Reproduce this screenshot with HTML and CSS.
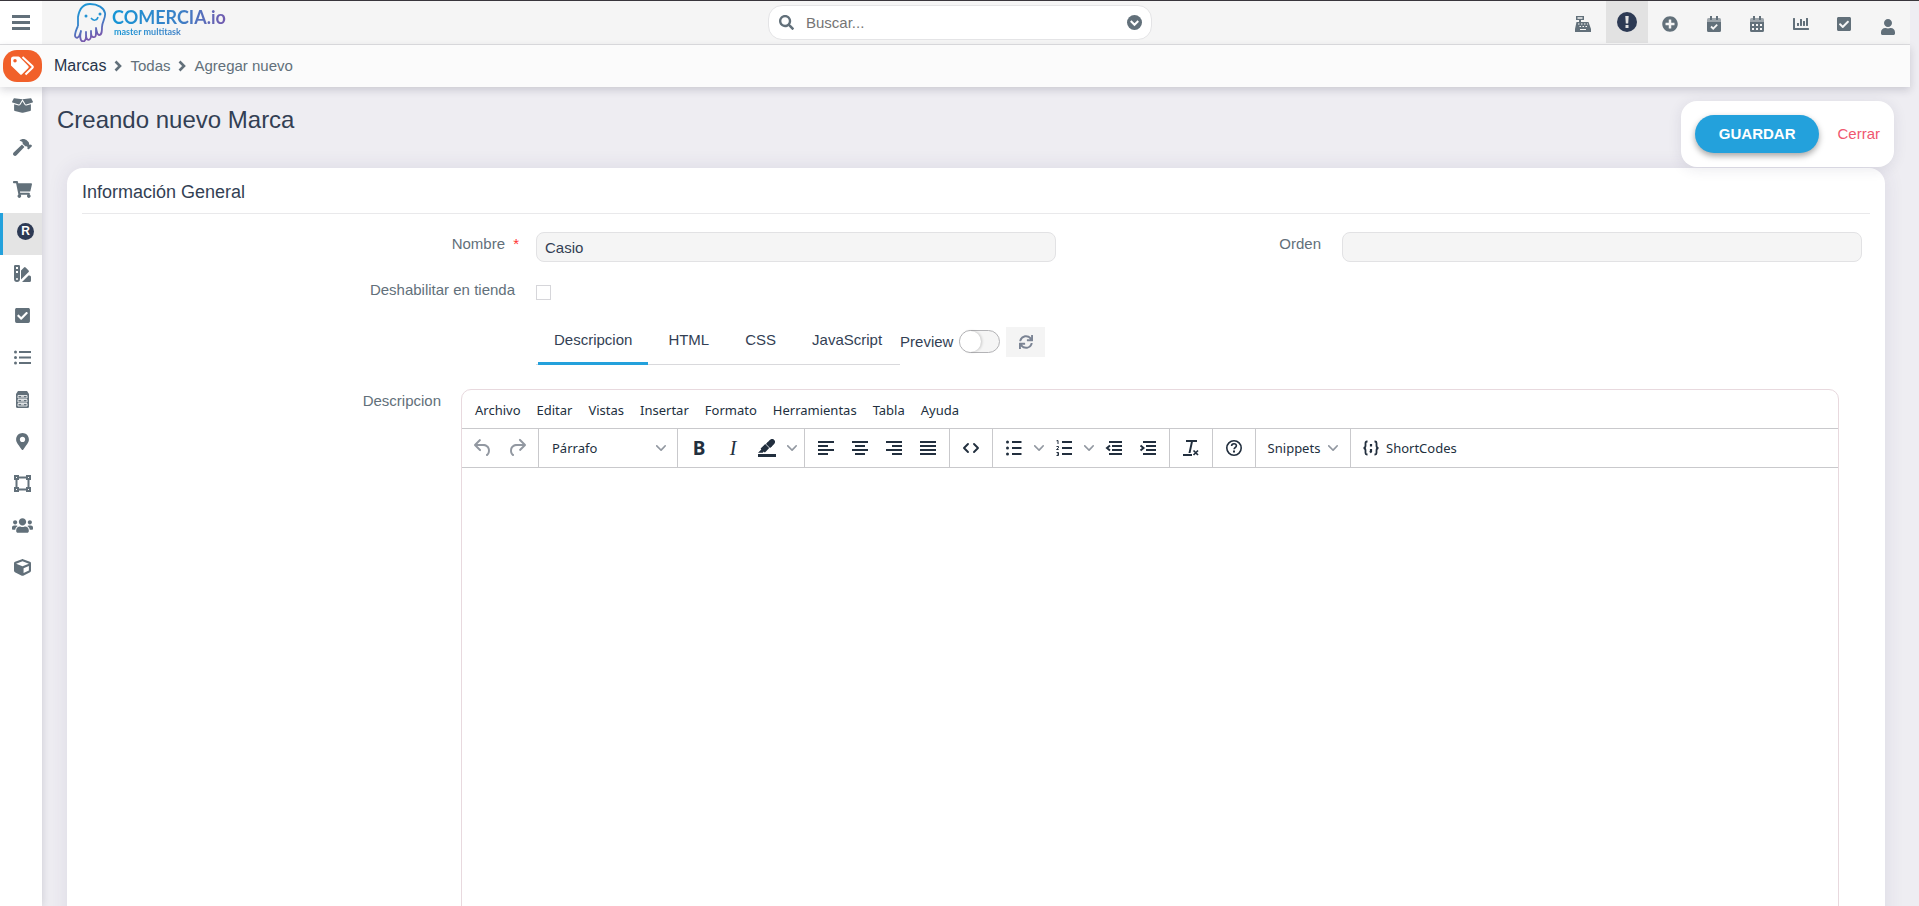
FILE: index.html
```html
<!DOCTYPE html>
<html lang="es">
<head>
<meta charset="utf-8">
<meta name="viewport" content="width=device-width, initial-scale=1">
<title>Creando nuevo Marca</title>
<link rel="stylesheet" href="styles.css">
</head>
<body>
<svg class="sprite" aria-hidden="true">
  <symbol id="check-square" viewBox="0 0 448 512"><path d="M400 480H48c-26.510 0-48-21.490-48-48V80c0-26.510 21.490-48 48-48h352c26.510 0 48 21.490 48 48v352c0 26.510-21.490 48-48 48zm-204.686-98.059l184-184c6.248-6.248 6.248-16.379 0-22.627l-22.627-22.627c-6.248-6.248-16.379-6.249-22.628 0L184 302.745l-70.059-70.059c-6.248-6.248-16.379-6.248-22.628 0l-22.627 22.627c-6.248 6.248-6.248 16.379 0 22.627l104 104c6.249 6.250 16.379 6.250 22.628.001z"/></symbol>
  <symbol id="chev" viewBox="0 0 10 10"><path d="M8.700 2.200c.3-.3.800-.3 1 0 .4.400.4.900 0 1.200L5.700 7.800c-.3.300-.9.300-1.200 0L.2 3.400a.8.800 0 0 1 0-1.200c.3-.3.800-.3 1.100 0L5 6l3.700-3.800Z"/></symbol>
  <symbol id="crumb" viewBox="0 0 8 12"><path d="M1.500 1.500 6 6 1.500 10.500" fill="none" stroke="currentColor" stroke-width="2.600"/></symbol>
</svg>

<div class="app">
  <header class="topbar">
    <div class="brand-area">
      <button class="menu-toggle" type="button" aria-label="Menú">
        <svg width="18" height="16" viewBox="0 0 18 16"><path d="M0 0h18v3H0zM0 6h18v3H0zM0 12h18v3H0z"/></svg>
      </button>
      <a class="brand" href="#">
        <svg width="34" height="40" viewBox="0 0 34 40">
          <defs><linearGradient id="ink" x1="0" y1="0" x2="0.300" y2="1"><stop offset="0" stop-color="#1a9ad8"/><stop offset=".5" stop-color="#2f86cc"/><stop offset="1" stop-color="#7a58ad"/></linearGradient></defs>
          <path d="M4 23C2 27 1 30 1 33c1 3 4 2 5-2l1-3c-1 4-1 7 0 9 2 3 5 1 5-3v-5c0 4 0 6 1 7 2 2 4 0 4-3v-5c0 4 1 6 2 6 3 1 3-2 3-5v-4c1 4 1 7 3 7 3 0 3-4 3-8 0-5 4-9 3-14C30 5 24 1 16 1 8 1 5 8 4 14c0 4 0 6 0 9" fill="none" stroke="url(#ink)" stroke-width="1.800" stroke-linejoin="round" transform="translate(0 1)"/>
          <circle cx="12" cy="14" r="1.500" fill="#2393d3"/><circle cx="26" cy="12" r="1.500" fill="#2393d3"/>
          <path d="M17 16c2 3 6 3 7-1" fill="none" stroke="#2393d3" stroke-width="1.500"/>
        </svg>
        <span class="brand-text"><span class="brand-name">COMERCIA.io</span><span class="brand-tag">master multitask</span></span>
      </a>
    </div>
    <div class="search">
      <svg width="15" height="15" viewBox="0 0 512 512"><path d="M505 442.700L405.300 343c-4.500-4.500-10.600-7-17-7H372c27.600-35.300 44-79.700 44-128C416 93.100 322.900 0 208 0S0 93.100 0 208s93.100 208 208 208c48.300 0 92.700-16.400 128-44v16.300c0 6.400 2.500 12.500 7 17l99.700 99.700c9.400 9.400 24.600 9.400 33.900 0l28.300-28.300c9.400-9.400 9.400-24.600.1-34zM208 336c-70.700 0-128-57.200-128-128 0-70.700 57.200-128 128-128 70.700 0 128 57.200 128 128 0 70.700-57.200 128-128 128z"/></svg>
      <input type="text" placeholder="Buscar..." aria-label="Buscar">
      <button type="button" aria-label="Opciones de búsqueda"><svg width="15" height="15" viewBox="0 0 16 16"><circle cx="8" cy="8" r="8"/><path d="m4 6.500 4 4 4-4" fill="none" stroke="#fff" stroke-width="2.200"/></svg></button>
    </div>
    <nav class="tools" aria-label="Herramientas">
      <button type="button" aria-label="Caja"><svg width="16" height="16" viewBox="0 0 16 16"><path d="M1 0h8v4H6v2h7.500L16 13v3H0v-3L1.500 6H4V4H1zM2.500 1.200v1.600h5V1.200z" fill-rule="evenodd"/><path d="M3 8h1.500M6 8h1.500M9 8h1.500M12 8h1M4.500 10.500H6M7.500 10.500H9M10.500 10.500H12M5 13.500h6" stroke="#f5f5f5" stroke-width="1.200"/></svg></button>
      <button class="current" type="button" aria-label="Avisos"><svg width="20" height="20" viewBox="0 0 20 20"><circle cx="10" cy="10" r="10"/><path d="M8.300 4h3.400l-.5 7.500H8.800zM8.500 13h3v3h-3z" fill="#e2e2e2"/></svg></button>
      <button type="button" aria-label="Agregar"><svg width="16" height="16" viewBox="0 0 512 512"><path d="M256 8C119 8 8 119 8 256s111 248 248 248 248-111 248-248S393 8 256 8zm144 276c0 6.600-5.400 12-12 12h-92v92c0 6.600-5.400 12-12 12h-56c-6.600 0-12-5.400-12-12v-92h-92c-6.600 0-12-5.400-12-12v-56c0-6.600 5.400-12 12-12h92v-92c0-6.600 5.400-12 12-12h56c6.600 0 12 5.400 12 12v92h92c6.600 0 12 5.400 12 12v56z"/></svg></button>
      <button type="button" aria-label="Tareas"><svg width="14" height="16" viewBox="0 0 14 16"><path d="M0 6h14v8.500a1.500 1.500 0 0 1-1.500 1.500h-11A1.500 1.500 0 0 1 0 14.500zM3 0h2v4H3zM9 0h2v4H9z"/><path d="M0 6V3.500Q0 2 1.500 2h11Q14 2 14 3.500V6z" opacity=".6"/><path d="m4 10.500 2.200 2.200 4-4" fill="none" stroke="#f5f5f5" stroke-width="1.800"/></svg></button>
      <button type="button" aria-label="Calendario"><svg width="14" height="16" viewBox="0 0 14 16"><path d="M0 6h14v8.500a1.500 1.500 0 0 1-1.500 1.500h-11A1.500 1.500 0 0 1 0 14.500zM3 0h2v4H3zM9 0h2v4H9z"/><path d="M0 6V3.500Q0 2 1.500 2h11Q14 2 14 3.500V6z" opacity=".6"/><path d="M2 8h2v2H2zm4 0h2v2H6zm4 0h2v2h-2zm-8 4h2v2H2zm4 0h2v2H6zm4 0h2v2h-2z" fill="#f5f5f5"/></svg></button>
      <button type="button" aria-label="Estadísticas"><svg width="16" height="16" viewBox="0 0 512 512"><path d="M332.800 320h38.400c6.400 0 12.800-6.400 12.800-12.800V172.800c0-6.400-6.400-12.800-12.800-12.800h-38.400c-6.400 0-12.800 6.400-12.800 12.800v134.400c0 6.400 6.400 12.800 12.800 12.800zm96 0h38.400c6.400 0 12.800-6.400 12.800-12.800V76.800c0-6.400-6.400-12.800-12.800-12.800h-38.400c-6.400 0-12.800 6.400-12.800 12.800v230.400c0 6.400 6.400 12.800 12.800 12.800zm-288 0h38.400c6.400 0 12.800-6.400 12.800-12.800v-70.400c0-6.400-6.400-12.800-12.800-12.800h-38.400c-6.400 0-12.800 6.400-12.800 12.800v70.400c0 6.400 6.400 12.800 12.800 12.800zm96 0h38.400c6.400 0 12.800-6.400 12.800-12.800V108.800c0-6.400-6.400-12.800-12.800-12.800h-38.400c-6.400 0-12.800 6.400-12.800 12.800v198.400c0 6.400 6.400 12.800 12.800 12.800zM496 384H64V80c0-8.840-7.160-16-16-16H16C7.160 64 0 71.160 0 80v336c0 17.670 14.330 32 32 32h464c8.840 0 16-7.160 16-16v-32c0-8.840-7.160-16-16-16z"/></svg></button>
      <button type="button" aria-label="Pendientes"><svg width="14" height="16"><use href="#check-square"/></svg></button>
      <button class="profile" type="button" aria-label="Perfil"><svg width="14" height="16" viewBox="0 0 448 512"><path d="M224 256c70.700 0 128-57.300 128-128S294.700 0 224 0 96 57.300 96 128s57.300 128 128 128zm89.600 32h-16.700c-22.200 10.200-46.900 16-72.900 16s-50.600-5.800-72.900-16h-16.700C60.200 288 0 348.200 0 422.400V464c0 26.500 21.500 48 48 48h352c26.500 0 48-21.500 48-48v-41.600c0-74.200-60.200-134.400-134.400-134.400z"/></svg></button>
    </nav>
  </header>

  <nav class="crumbs" aria-label="Ruta">
    <span class="crumb-badge"><svg width="24" height="20" viewBox="0 0 24 20"><path d="M0 3v6.500L9 18.300q1 1 2 0L17.300 12q1-1 0-2L8.800 1.200Q8.200.5 7.300.5H2.500Q0 .5 0 3zM4 3a1.700 1.700 0 1 1 0 3.500A1.700 1.700 0 0 1 4 3z" fill="#fff" fill-rule="evenodd"/><path d="M11.500 1l10 9.200q.8.800 0 1.600L14.500 18.500" fill="none" stroke="#fff" stroke-width="2"/></svg></span>
    <a class="crumb-root" href="#">Marcas</a>
    <svg width="8" height="12"><use href="#crumb"/></svg>
    <a href="#">Todas</a>
    <svg width="8" height="12"><use href="#crumb"/></svg>
    <a href="#">Agregar nuevo</a>
  </nav>

  <div class="body">
    <nav class="sidebar" aria-label="Secciones">
      <a href="#" aria-label="Productos"><svg width="21" height="17" viewBox="0 0 640 512"><path d="M425.700 256c-16.900 0-32.800-9-41.400-23.400L320 126l-64.200 106.600c-8.700 14.500-24.600 23.500-41.500 23.500-4.500 0-9-.6-13.300-1.900L64 215v178c0 14.700 10 27.500 24.200 31l216.200 54.100c10.200 2.500 20.900 2.500 31 0L551.800 424c14.200-3.600 24.200-16.400 24.200-31V215l-137 39.100c-4.300 1.300-8.800 1.900-13.300 1.900zm212.600-112.200L586.800 41c-3.100-6.200-9.800-9.800-16.700-8.900L320 64l91.700 152.100c3.800 6.300 11.400 9.300 18.500 7.300l197.900-56.500c9.900-2.900 14.700-13.900 10.200-23.100zM53.200 41L1.700 143.800c-4.600 9.200.3 20.200 10.100 23l197.900 56.500c7.100 2 14.700-1 18.500-7.300L320 64 69.800 32.100c-6.900-.8-13.500 2.700-16.600 8.900z"/></svg></a>
      <a href="#" aria-label="Fabricación"><svg width="19" height="17" viewBox="0 0 576 512"><path d="M571.310 193.940l-22.630-22.630c-6.250-6.250-16.380-6.250-22.630 0l-11.310 11.310-28.900-28.900c5.630-21.310.36-44.900-16.350-61.610l-45.250-45.250c-62.480-62.480-163.790-62.480-226.280 0l90.510 45.250v18.750c0 16.970 6.740 33.250 18.750 45.250l49.140 49.140c16.710 16.710 40.300 21.980 61.610 16.350l28.900 28.900-11.310 11.310c-6.250 6.250-6.250 16.380 0 22.630l22.630 22.630c6.250 6.250 16.380 6.250 22.630 0l90.510-90.510c6.230-6.240 6.230-16.370-.02-22.620zm-286.720-15.200c-3.700-3.700-6.840-7.790-9.850-11.950L19.640 404.960c-25.570 23.880-26.260 64.190-1.530 88.930s65.050 24.050 88.920-1.530l238.130-255.070c-3.960-2.910-7.900-5.870-11.440-9.410l-49.130-49.140z"/></svg></a>
      <a href="#" aria-label="Ventas"><svg width="19" height="17" viewBox="0 0 576 512"><path d="M528.120 301.319l47.273-208C578.806 78.301 567.391 64 551.990 64H159.208l-9.166-44.810C147.758 8.021 137.930 0 126.529 0H24C10.745 0 0 10.745 0 24v16c0 13.255 10.745 24 24 24h69.883l70.248 343.435C147.325 417.100 136 435.222 136 456c0 30.928 25.072 56 56 56s56-25.072 56-56c0-15.674-6.447-29.835-16.824-40h209.647C430.447 426.165 424 440.326 424 456c0 30.928 25.072 56 56 56s56-25.072 56-56c0-22.172-12.888-41.332-31.579-50.405l5.517-24.276c3.413-15.018-8.002-29.319-23.403-29.319H218.117l-6.545-32h293.145c11.206 0 20.920-7.754 23.403-18.681z"/></svg></a>
      <a class="active" href="#" aria-label="Marcas"><span class="reg">R</span></a>
      <a href="#" aria-label="Variantes"><svg width="17" height="17" viewBox="0 0 17 17"><path d="M1.200 0h3.600Q6 0 6 1.200V14a3 3 0 0 1-6 0V1.200Q0 0 1.200 0zM2 2v2h2V2zm0 4v2h2V6zm1 7a1 1 0 1 0 0 2 1 1 0 0 0 0-2z" fill-rule="evenodd"/><path d="M7 5.500 10 2.500q.8-.8 1.600 0l3 3q.8.800 0 1.600L7 14.500zM15.500 10.500q1.500 0 1.500 1.500v3.500q0 1.500-1.500 1.500H8l6.500-6.500z"/></svg></a>
      <a href="#" aria-label="Tareas"><svg width="15" height="17"><use href="#check-square"/></svg></a>
      <a href="#" aria-label="Listas"><svg width="17" height="15" viewBox="0 0 17 15"><circle cx="1.500" cy="2" r="1.500"/><circle cx="1.500" cy="7.500" r="1.500"/><circle cx="1.500" cy="13" r="1.500"/><path d="M5 1h12v2H5zM5 6.500h12v2H5zM5 12h12v2H5z"/></svg></a>
      <a href="#" aria-label="Almacén"><svg width="13" height="17" viewBox="0 0 13 17"><path d="M2 0h9l2 3v12.500q0 1.500-1.500 1.500h-10Q0 17 0 15.500V3z"/><path d="M2 4.500h9V7H2zM2 8.500h9V11H2zM2 12.500h9V15H2zM5 5.700h3M5 9.700h3M5 13.700h3" fill="none" stroke="#fff" stroke-width=".8"/></svg></a>
      <a href="#" aria-label="Ubicaciones"><svg width="13" height="17" viewBox="0 0 384 512"><path d="M172.268 501.670C26.970 291.031 0 269.413 0 192 0 85.961 85.961 0 192 0s192 85.961 192 192c0 77.413-26.970 99.031-172.268 309.670-9.535 13.774-29.930 13.773-39.464 0zM192 272c44.183 0 80-35.817 80-80s-35.817-80-80-80-80 35.817-80 80 35.817 80 80 80z"/></svg></a>
      <a href="#" aria-label="Diseño"><svg width="17" height="17" viewBox="0 0 17 17"><path d="M5 2.500h7M5 14.500h7M2.500 5v7M14.500 5v7" stroke="currentColor" stroke-width="2"/><path d="M0 0h5v5H0zm2 2v1h1V2zM12 0h5v5h-5zm2 2v1h1V2zM0 12h5v5H0zm2 2v1h1v-1zM12 12h5v5h-5zm2 2v1h1v-1z" fill-rule="evenodd"/></svg></a>
      <a href="#" aria-label="Clientes"><svg width="21" height="17" viewBox="0 0 640 512"><path d="M96 224c35.300 0 64-28.700 64-64s-28.700-64-64-64-64 28.700-64 64 28.700 64 64 64zm448 0c35.300 0 64-28.700 64-64s-28.700-64-64-64-64 28.700-64 64 28.700 64 64 64zm32 32h-64c-17.600 0-33.500 7.100-45.100 18.600 40.300 22.100 68.900 62 75.100 109.400h66c17.700 0 32-14.300 32-32v-32c0-35.300-28.700-64-64-64zm-256 0c61.900 0 112-50.100 112-112S381.900 32 320 32 208 82.100 208 144s50.100 112 112 112zm76.800 32h-8.300c-20.800 10-43.900 16-68.500 16s-47.600-6-68.500-16h-8.300C179.600 288 128 339.600 128 403.200V432c0 26.500 21.500 48 48 48h288c26.500 0 48-21.500 48-48v-28.800c0-63.600-51.600-115.200-115.200-115.200zm-223.700-13.400C161.500 263.100 145.600 256 128 256H64c-35.300 0-64 28.700-64 64v32c0 17.700 14.300 32 32 32h65.900c6.300-47.400 34.900-87.300 75.200-109.400z"/></svg></a>
      <a href="#" aria-label="Inventario"><svg width="17" height="17" viewBox="0 0 512 512"><path d="M239.100 6.300l-208 78c-18.700 7-31.100 25-31.100 45v225.100c0 18.200 10.300 34.800 26.500 42.900l208 104c13.500 6.800 29.400 6.800 42.900 0l208-104c16.300-8.100 26.500-24.800 26.500-42.900V129.300c0-20-12.400-37.900-31.100-44.900l-208-78C262 2.200 250 2.200 239.100 6.300zM256 68.400l192 72v1.100l-192 78-192-78v-1.100l192-72zm32 356V275.500l160-65v133.900l-160 80z"/></svg></a>
    </nav>

    <main class="main">
      <div class="page-head">
        <h1>Creando nuevo Marca</h1>
        <div class="actions">
          <button class="save" type="submit" form="brand-form">GUARDAR</button>
          <a class="close" href="#">Cerrar</a>
        </div>
      </div>

      <form class="card" id="brand-form">
        <h2>Información General</h2>
        <div class="fields">
          <div class="field">
            <label for="name">Nombre <span class="required">*</span></label>
            <input class="text" id="name" type="text" value="Casio">
          </div>
          <div class="field">
            <label for="order">Orden</label>
            <input class="text" id="order" type="text">
          </div>
          <div class="field">
            <label for="disabled">Deshabilitar en tienda</label>
            <input class="tick" id="disabled" type="checkbox">
          </div>
          <div class="tab-row">
            <div class="tabs" role="tablist">
              <button type="button" role="tab" aria-selected="true">Descripcion</button>
              <button type="button" role="tab" aria-selected="false">HTML</button>
              <button type="button" role="tab" aria-selected="false">CSS</button>
              <button type="button" role="tab" aria-selected="false">JavaScript</button>
            </div>
            <label for="preview">Preview</label>
            <input class="switch" id="preview" type="checkbox">
            <button class="refresh" type="button" aria-label="Actualizar"><svg width="14" height="14" viewBox="0 0 512 512"><path d="M440.650 12.570l4 82.770A247.160 247.160 0 0 0 255.830 8C134.730 8 33.910 94.920 12.290 209.820A12 12 0 0 0 24.090 224h49.050a12 12 0 0 0 11.670-9.260 175.910 175.910 0 0 1 317-56.940l-101.460-4.860a12 12 0 0 0-12.570 12v47.410a12 12 0 0 0 12 12H500a12 12 0 0 0 12-12V12a12 12 0 0 0-12-12h-47.370a12 12 0 0 0-11.980 12.570zM255.830 432a175.610 175.610 0 0 1-146-77.800l101.800 4.870a12 12 0 0 0 12.570-12v-47.400a12 12 0 0 0-12-12H12a12 12 0 0 0-12 12V500a12 12 0 0 0 12 12h47.350a12 12 0 0 0 12-12.600l-4.150-82.570A247.170 247.170 0 0 0 255.830 504c121.110 0 221.930-86.920 243.550-201.820a12 12 0 0 0-11.800-14.180h-49.050a12 12 0 0 0-11.670 9.260A175.860 175.860 0 0 1 255.830 432z"/></svg></button>
          </div>
        </div>

        <div class="editor-row">
          <label for="description">Descripcion</label>
          <div class="editor">
            <div class="menubar">
              <button type="button">Archivo</button><button type="button">Editar</button><button type="button">Vistas</button><button type="button">Insertar</button><button type="button">Formato</button><button type="button">Herramientas</button><button type="button">Tabla</button><button type="button">Ayuda</button>
            </div>
            <div class="toolbar">
              <div class="group muted">
                <button type="button" aria-label="Deshacer"><svg width="24" height="24" viewBox="0 0 24 24"><path d="M6.400 8H12c3.700 0 6.200 2 6.800 5.100.6 2.700-.4 5.600-2.300 6.800a1 1 0 0 1-1-1.800c1.100-.6 1.800-2.700 1.400-4.600-.5-2.100-2.100-3.500-4.900-3.500H6.400l3.300 3.300a1 1 0 1 1-1.400 1.400l-5-5a1 1 0 0 1 0-1.400l5-5a1 1 0 0 1 1.400 1.400L6.400 8Z"/></svg></button>
                <button type="button" aria-label="Rehacer"><svg width="24" height="24" viewBox="0 0 24 24"><path d="M17.600 10H12c-2.800 0-4.400 1.400-4.900 3.500-.4 2 .3 4 1.400 4.600a1 1 0 1 1-1 1.800c-2-1.200-2.900-4.100-2.300-6.800.6-3 3-5.100 6.800-5.100h5.600l-3.300-3.300a1 1 0 1 1 1.400-1.400l5 5a1 1 0 0 1 0 1.400l-5 5a1 1 0 0 1-1.400-1.400l3.300-3.300Z"/></svg></button>
              </div>
              <div class="group">
                <span class="block-format"><select aria-label="Formato de bloque"><option>Párrafo</option></select><svg class="chev" width="10" height="10"><use href="#chev"/></svg></span>
              </div>
              <div class="group">
                <button class="bold" type="button">B</button>
                <button class="italic" type="button">I</button>
                <button type="button" aria-label="Color de fondo"><svg width="24" height="24" viewBox="0 0 24 24"><path d="M3 18h18v3H3z"/><path d="M7.700 16.700H3l3.300-3.300-.7-.8L10.200 8l4 4.100-4 4.200c-.2.200-.6.200-.8 0l-.6-.7-1.100 1.100Zm5-10.500L11 8l4 4 1.800-1.700z"/><path d="m11.500 7.400 3-3.100c2-2 3.800-1.700 5 0 1 1.300.6 3-.8 4.300l-3 3z"/></svg></button>
                <button class="arrow" type="button" aria-label="Elegir color"><svg class="chev" width="10" height="10"><use href="#chev"/></svg></button>
              </div>
              <div class="group">
                <button type="button" aria-label="Izquierda"><svg width="24" height="24" viewBox="0 0 24 24"><path d="M4 5h16v2H4zM4 9h10v2H4zM4 13h16v2H4zM4 17h10v2H4z"/></svg></button>
                <button type="button" aria-label="Centrar"><svg width="24" height="24" viewBox="0 0 24 24"><path d="M4 5h16v2H4zM7 9h10v2H7zM4 13h16v2H4zM7 17h10v2H7z"/></svg></button>
                <button type="button" aria-label="Derecha"><svg width="24" height="24" viewBox="0 0 24 24"><path d="M4 5h16v2H4zM10 9h10v2H10zM4 13h16v2H4zM10 17h10v2H10z"/></svg></button>
                <button type="button" aria-label="Justificar"><svg width="24" height="24" viewBox="0 0 24 24"><path d="M4 5h16v2H4zM4 9h16v2H4zM4 13h16v2H4zM4 17h16v2H4z"/></svg></button>
              </div>
              <div class="group">
                <button type="button" aria-label="Código fuente"><svg class="outline" width="24" height="24" viewBox="0 0 24 24" stroke-width="1.900" stroke-linecap="round" stroke-linejoin="round"><path d="m9 8-4 4 4 4M15 8l4 4-4 4"/></svg></button>
              </div>
              <div class="group">
                <button type="button" aria-label="Viñetas"><svg width="24" height="24" viewBox="0 0 24 24"><path d="M10 5h9.500v2H10zM10 11h9.500v2H10zM10 17h9.500v2H10z"/><circle cx="5.500" cy="6" r="1.500"/><circle cx="5.500" cy="12" r="1.500"/><circle cx="5.500" cy="18" r="1.500"/></svg></button>
                <button class="arrow" type="button" aria-label="Tipo de viñeta"><svg class="chev" width="10" height="10"><use href="#chev"/></svg></button>
                <button type="button" aria-label="Numeración"><svg width="24" height="24" viewBox="0 0 24 24"><path d="M10 5h10v2H10zM10 11h10v2H10zM10 17h10v2H10z"/><path d="M4.500 4.800 6 4.500V8M4.500 10.500h2v1.300l-2 1.700h2.200M4.500 16.500h2v3h-2M5 18h1.500" fill="none" stroke="currentColor"/></svg></button>
                <button class="arrow" type="button" aria-label="Tipo de numeración"><svg class="chev" width="10" height="10"><use href="#chev"/></svg></button>
                <button type="button" aria-label="Reducir sangría"><svg width="24" height="24" viewBox="0 0 24 24"><path d="M7 5h13v2H7zM10 9h10v2H10zM10 13h10v2H10zM7 17h13v2H7z"/><path d="m8 9.500-3 2.500 3 2.500" fill="none" stroke="currentColor" stroke-width="2"/></svg></button>
                <button type="button" aria-label="Aumentar sangría"><svg width="24" height="24" viewBox="0 0 24 24"><path d="M7 5h13v2H7zM10 9h10v2H10zM10 13h10v2H10zM7 17h13v2H7z"/><path d="m4.500 9.500 3 2.500-3 2.500" fill="none" stroke="currentColor" stroke-width="2"/></svg></button>
              </div>
              <div class="group">
                <button type="button" aria-label="Limpiar formato"><svg width="24" height="24" viewBox="0 0 24 24"><path d="M7 4h11v2H7zM12 5.500h2L11.500 17h-2zM4 18h9v2H4z"/><path d="m14.500 14.500 4.500 4.500M19 14.500l-4.500 4.500" stroke="currentColor" stroke-width="1.700"/></svg></button>
              </div>
              <div class="group">
                <button type="button" aria-label="Ayuda"><svg class="outline" width="24" height="24" viewBox="0 0 24 24"><circle cx="12" cy="12" r="7.200" stroke-width="1.600"/><path d="M9.600 10c0-1.500 1-2.300 2.400-2.300s2.400.9 2.400 2.100c0 1.700-2.300 1.700-2.300 3.500" stroke-width="1.600"/><path d="M12 14.500v2" stroke-width="2"/></svg></button>
              </div>
              <div class="group">
                <button class="snippets" type="button">Snippets<svg class="chev" width="10" height="10"><use href="#chev"/></svg></button>
              </div>
              <div class="group">
                <button class="shortcodes" type="button"><svg class="outline" width="24" height="24" viewBox="0 0 24 24" stroke-width="1.800"><path d="M8.500 5.500H8q-1.500 0-1.500 1.500v2.500Q6.500 12 4.500 12q2 0 2 2.500V17q0 1.500 1.500 1.500h.5M15.500 5.500h.5q1.500 0 1.500 1.500v2.500q0 2.500 2 2.500-2 0-2 2.500V17q0 1.500-1.500 1.500h-.5"/><path d="M12 8v2.500M12 13v2.500l-1 1" stroke-width="2.200"/></svg>ShortCodes</button>
              </div>
            </div>
            <textarea id="description"></textarea>
          </div>
        </div>
      </form>
    </main>
  </div>
</div>
</body>
</html>
```

FILE: styles.css
```css
* { box-sizing: border-box; }

body {
  margin: 0;
  background: #eeedf2;
  color: #333f54;
  font: 15px/24px "Liberation Sans", Arial, sans-serif;
}

button, input, select, textarea {
  margin: 0;
  padding: 0;
  border: 0;
  background: none;
  color: inherit;
  font: inherit;
}

a { color: inherit; text-decoration: none; }
svg { display: block; flex: none; fill: currentColor; }
.outline { fill: none; stroke: currentColor; }
.sprite { position: absolute; width: 0; height: 0; }

.app {
  display: flex;
  flex-direction: column;
  height: 100vh;
  overflow: hidden;
  border-top: 1px solid #39363c;
}

/* Top bar */
.topbar {
  display: grid;
  grid-template-columns: minmax(0, 768fr) 384px minmax(0, 758fr);
  flex: none;
  height: 44px;
  margin-right: 9px;
  border-bottom: 1px solid #dedee0;
  background: #f5f5f5;
  color: #62707a;
}

.brand-area { display: flex; }

.menu-toggle {
  display: flex;
  align-items: center;
  width: 42px;
  padding-left: 12px;
  background: #fff;
}

.brand {
  display: flex;
  align-items: flex-start;
  gap: 4px;
  padding: 1px 0 0 32px;
}

.brand-text { display: flex; flex-direction: column; padding-top: 6px; }

.brand-name, .brand-tag {
  background: linear-gradient(100deg, #1496d6, #3c7fc6 60%, #7459ae);
  background-clip: text;
  color: transparent;
  font-family: Lato, sans-serif;
  font-weight: 700;
}

.brand-name { font-size: 18px; line-height: 19px; }
.brand-tag { padding-left: 2px; font-size: 9px; line-height: 9px; }

.search {
  display: flex;
  align-items: center;
  gap: 12px;
  height: 35px;
  margin-top: 4px;
  padding: 0 9px 0 10px;
  border: 1px solid #e4e4e6;
  border-radius: 14px;
  background: #fff;
}

.search input { flex: 1; min-width: 0; outline: 0; }
.search input::placeholder { color: #757575; opacity: 1; }

.tools {
  display: flex;
  justify-content: space-between;
  justify-self: end;
  width: 348px;
  padding-right: 1px;
}

.tools button {
  display: grid;
  place-items: center;
  width: 42px;
  height: 42px;
  padding-top: 4px;
}

.tools .current { padding-top: 0; background: #e2e2e2; color: #2d3a54; }
.tools .profile { padding-top: 10px; }

/* Breadcrumb */
.crumbs {
  position: relative;
  display: flex;
  align-items: center;
  gap: 8px;
  flex: none;
  height: 42px;
  margin-right: 9px;
  padding-left: 3px;
  background: #fbfbfb;
  box-shadow: 0 3px 8px rgba(40, 40, 60, .18);
  color: #62707a;
}

.crumb-badge {
  display: grid;
  place-items: center;
  width: 39px;
  height: 32px;
  margin-right: 4px;
  border-radius: 14px;
  background: #f1602a;
}

.crumb-root { color: #27344a; font-size: 16px; }

/* Side navigation */
.body { display: flex; flex: 1; min-height: 0; }

.sidebar {
  flex: none;
  width: 42px;
  background: #fff;
  box-shadow: 0 0 8px rgba(40, 40, 60, .18);
  color: #62707a;
}

.sidebar a {
  display: grid;
  place-items: center;
  height: 42px;
  padding-bottom: 5px;
  border-left: 3px solid transparent;
}

.sidebar .active {
  padding-left: 6px;
  border-left-color: #23a1dc;
  background: #e4e4e4;
}

.reg {
  width: 17px;
  height: 17px;
  border-radius: 50%;
  background: #2d3a54;
  color: #fff;
  font-size: 12px;
  font-weight: 700;
  line-height: 17px;
  text-align: center;
}

/* Page */
.main { flex: 1; min-width: 0; }

.page-head {
  display: flex;
  justify-content: space-between;
  padding: 14px 25px 1px 15px;
}

h1 {
  margin: 0;
  padding-top: 3px;
  font-size: 24px;
  font-weight: 400;
  line-height: 32px;
}

.actions {
  position: relative;
  display: flex;
  align-items: center;
  gap: 18px;
  height: 66px;
  padding: 0 14px;
  border-radius: 16px;
  background: #fff;
  box-shadow: 0 2px 14px rgba(40, 40, 80, .1);
}

.save {
  height: 38px;
  padding: 0 24px;
  border-radius: 19px;
  background: #23a1dc;
  box-shadow: 0 3px 6px rgba(0, 0, 0, .35);
  color: #fff;
  font-weight: 700;
}

.close { color: #f0566f; }

.card {
  min-height: 100%;
  margin: 0 34px 0 25px;
  padding: 0 15px;
  border-radius: 16px;
  background: #fff;
  box-shadow: 0 0 20px rgba(60, 50, 110, .1);
}

h2 {
  margin: 0;
  padding: 12px 0 9px;
  border-bottom: 1px solid #e9e9eb;
  font-size: 18px;
  font-weight: 400;
}

.fields {
  display: grid;
  grid-template-columns: 1fr 1fr;
  gap: 16px 0;
  padding: 18px 0 0 176px;
}

.field {
  display: grid;
  grid-template-columns: 257px 1fr;
  gap: 21px;
  align-items: start;
  padding-right: 8px;
}

.field label { color: #62707a; text-align: right; }
.required { margin: 0 -4px 0 4px; color: #f33; }

.text {
  width: 100%;
  height: 30px;
  padding: 0 8px;
  border: 1px solid #e2e2e4;
  border-radius: 8px;
  background: #f5f5f5;
}

.tick {
  appearance: none;
  width: 15px;
  height: 15px;
  margin-top: 7px;
  border: 1px solid #d6d6da;
  background: #fff;
}

.tab-row {
  display: flex;
  align-items: center;
  grid-column: 1 / -1;
  padding-left: 278px;
}

.tabs { display: flex; box-shadow: inset 0 -1px #d9d9dc; }

.tabs button {
  margin: 0 2px;
  padding: 10px 16px;
  border-bottom: 3px solid transparent;
}

.tabs [aria-selected="true"] { border-bottom-color: #23a1dc; }

.switch {
  appearance: none;
  width: 41px;
  height: 23px;
  margin: 0 6px;
  border: 1px solid #b3b3b6;
  border-radius: 12px;
  background: #f5f5f5;
}

.switch::before {
  display: block;
  width: 21px;
  height: 21px;
  border-radius: 50%;
  background: #fff;
  box-shadow: 1px 0 3px rgba(0, 0, 0, .2);
  content: "";
}

.refresh {
  display: grid;
  place-items: center;
  width: 39px;
  height: 30px;
  background: #f4f4f4;
  color: #7b8494;
}

/* Rich text editor */
.editor-row {
  display: grid;
  grid-template-columns: 359px 1fr;
  gap: 20px;
  padding: 24px 31px 0 0;
}

.editor-row > label { color: #62707a; text-align: right; }

.editor {
  min-width: 0;
  overflow: hidden;
  border: 1px solid #e8d9de;
  border-radius: 10px;
  color: #222f3e;
  font: 13px/22px "Noto Sans", sans-serif;
}

.menubar {
  display: flex;
  gap: 16px;
  height: 38px;
  padding: 1px 13px 0;
}

.toolbar {
  display: flex;
  height: 40px;
  border-top: 1px solid #c9c9cc;
  border-bottom: 1px solid #c9c9cc;
}

.group { display: flex; padding: 0 4px; border-right: 1px solid #c9c9cc; }
.group:last-child { border-right: 0; }

.group button {
  display: flex;
  align-items: center;
  justify-content: center;
  width: 34px;
}

.group .arrow { width: 16px; }
.muted, .chev { color: #9298a1; }
.group .bold { font: 700 19px/24px "Noto Sans", sans-serif; }
.group .italic { font: italic 20px/24px "Liberation Serif", serif; }

.block-format { display: grid; align-items: center; width: 130px; }

.block-format > * { grid-area: 1 / 1; }

.block-format select {
  appearance: none;
  width: 100%;
  height: 38px;
  padding-left: 9px;
}

.block-format .chev { justify-self: end; margin-right: 7px; }
.group .snippets { gap: 8px; width: 86px; }
.group .shortcodes { gap: 3px; width: auto; padding: 0 4px; }

textarea {
  display: block;
  width: 100%;
  height: 600px;
  padding: 16px;
  outline: 0;
  resize: none;
}
```
